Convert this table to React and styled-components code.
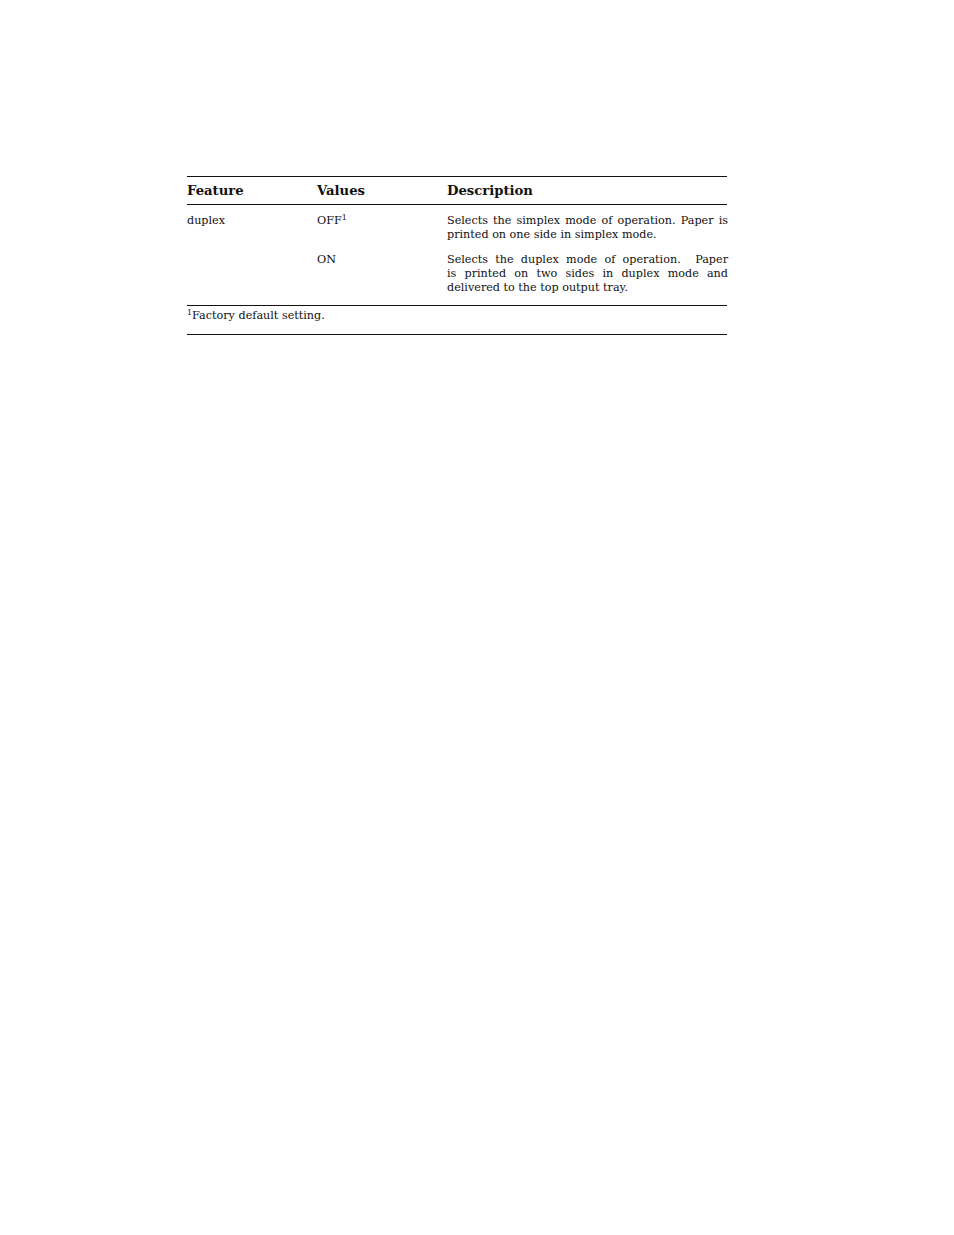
import React from "react";
import styled, { createGlobalStyle } from "styled-components";

const Global = createGlobalStyle`
  html, body { margin: 0; padding: 0; background: #fff; }
  body { font-family: "DejaVu Serif", "Liberation Serif", serif; color: #111; }
`;

const Page = styled.div`
  width: 954px;
  min-height: 1235px;
  padding-top: 176px;
  padding-left: 187px;
  box-sizing: border-box;
`;

const Table = styled.div`
  width: 540px;
  border-top: 1px solid #111;
  border-bottom: 1px solid #111;
`;

const Row = styled.div`
  display: grid;
  grid-template-columns: 130px 130px 281px;
`;

const Head = styled(Row)`
  height: 27px;
  align-items: center;
  border-bottom: 1px solid #111;
  font-weight: bold;
  font-size: 13.2px;
`;

const Body = styled.div`
  padding: 9px 0 10px;
  border-bottom: 1px solid #111;
  display: flex;
  flex-direction: column;
  gap: 11px;
`;

const Cell = styled.div`
  font-size: 11.2px;
  line-height: 14px;
`;

const Line = styled.span`
  display: block;
  white-space: nowrap;
  ${(p) =>
    p.$last
      ? ""
      : "text-align: justify; text-align-last: justify; white-space: normal;"}
`;

const Sup = styled.sup`
  font-size: 8px;
  line-height: 0;
  vertical-align: 4px;
`;

const Foot = styled.div`
  height: 28px;
  padding-top: 3px;
  box-sizing: border-box;
  font-size: 11.2px;
  line-height: 14px;
`;

function Justified({ lines }) {
  return lines.map((l, i) => (
    <Line key={i} $last={i === lines.length - 1}>
      {l}
    </Line>
  ));
}

export default function App() {
  return (
    <Page>
      <Global />
      <Table>
        <Head>
          <div>Feature</div>
          <div>Values</div>
          <div>Description</div>
        </Head>
        <Body>
          <Row>
            <Cell>duplex</Cell>
            <Cell>
              OFF<Sup>1</Sup>
            </Cell>
            <Cell>
              <Justified
                lines={[
                  "Selects the simplex mode of operation. Paper is",
                  "printed on one side in simplex mode.",
                ]}
              />
            </Cell>
          </Row>
          <Row>
            <Cell />
            <Cell>ON</Cell>
            <Cell>
              <Justified
                lines={[
                  "Selects the duplex mode of operation.\u00a0 Paper",
                  "is printed on two sides in duplex mode and",
                  "delivered to the top output tray.",
                ]}
              />
            </Cell>
          </Row>
        </Body>
        <Foot>
          <Sup>1</Sup>Factory default setting.
        </Foot>
      </Table>
    </Page>
  );
}
